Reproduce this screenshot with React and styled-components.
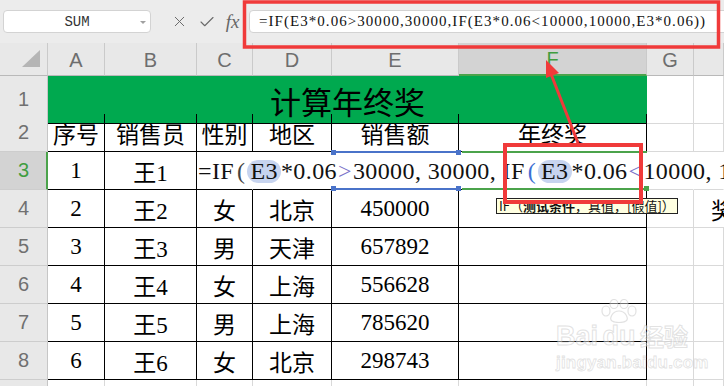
import React from 'react';
import styled, {createGlobalStyle} from 'styled-components';
import {X, Check} from 'lucide-react';

// sheet columns: row header, A..H
const COLS = '48px 57px 92px 56px 79px 127px 188px 47px 1fr';
const SERIF = '"Liberation Serif", "Noto Sans CJK SC", serif';

const GlobalStyle = createGlobalStyle`
  html, body {
    margin: 0;
    padding: 0;
    background: #fff;
    overflow: hidden;
  }
`;

const Page = styled.div`
  position: relative;
  width: 724px;
  height: 386px;
  overflow: hidden;
  background: #fff;
  font-family: "Liberation Sans", "Noto Sans CJK SC", sans-serif;
`;

const Toolbar = styled.div`
  display: flex;
  align-items: center;
  height: 43px;
  background: #ececec;
`;

const NameBox = styled.div`
  position: relative;
  box-sizing: border-box;
  width: 148px;
  height: 23px;
  margin-left: 3px;
  margin-right: 15px;
  background: #fff;
  border: 1px solid #d3d3d3;
  border-radius: 4px;
  display: flex;
  align-items: center;
  justify-content: center;
  font: 14px "Liberation Mono", monospace;
  color: #333;
`;

const Caret = styled.span`
  position: absolute;
  right: 4px;
  top: 10px;
  border-left: 3px solid transparent;
  border-right: 3px solid transparent;
  border-top: 3px solid #a0a0a0;
`;

const IconSlot = styled.div`
  width: ${(p) => p.$w || 27}px;
  display: flex;
  justify-content: center;
  align-items: center;
  color: #6a6a6a;
`;

const Fx = styled.span`
  font: italic 19px "Liberation Serif", serif;
  color: #666;
`;

const FormulaBox = styled.div`
  box-sizing: border-box;
  flex: 1;
  height: 23px;
  margin-left: 4px;
  margin-right: -12px;
  padding-left: 9px;
  background: #fff;
  border: 1px solid #d3d3d3;
  border-radius: 4px;
  display: flex;
  align-items: center;
  font: 15px ${SERIF};
  letter-spacing: 1.05px;
  color: #111;
  white-space: nowrap;
  overflow: hidden;
`;

const Row = styled.div`
  display: grid;
  grid-template-columns: ${COLS};
  height: ${(p) => p.$h || 38}px;
`;

const Corner = styled.div`
  box-sizing: border-box;
  grid-row: 1;
  background: #e8e8e8;
  border-right: 1px solid #cacaca;
  border-bottom: 1px solid #b9b9b9;
  display: flex;
  align-items: flex-end;
  justify-content: flex-end;
  padding: 0 7px 8px 0;
`;

const CornerTri = styled.span`
  width: 0;
  height: 0;
  border-left: 18px solid transparent;
  border-bottom: 17px solid #b5b5b5;
`;

const ColHead = styled.div`
  box-sizing: border-box;
  grid-row: 1;
  display: flex;
  align-items: center;
  justify-content: center;
  background: ${(p) => (p.$active ? '#d3d3d3' : '#e8e8e8')};
  border-right: 1px solid #cacaca;
  border-bottom: ${(p) => (p.$active ? '2px solid #4ba34b' : '1px solid #b9b9b9')};
  color: ${(p) => (p.$active ? '#3f9d3f' : '#6e6e6e')};
  font: 20px "Liberation Sans", sans-serif;
  padding-top: 2px;
`;

const RowHead = styled.div`
  box-sizing: border-box;
  grid-row: 1;
  grid-column: 1;
  display: flex;
  align-items: center;
  justify-content: center;
  background: ${(p) => (p.$active ? '#d3d3d3' : '#e8e8e8')};
  border-right: ${(p) => (p.$active ? '2px solid #4ba34b' : '1px solid #c6c6c6')};
  border-bottom: 1px solid #cdcdcd;
  color: ${(p) => (p.$active ? '#3f9d3f' : '#707070')};
  font: 20px "Liberation Sans", sans-serif;
  padding-left: ${(p) => (p.$active ? 1 : 0)}px;
`;

const Cell = styled.div`
  box-sizing: border-box;
  grid-row: 1;
  grid-column: ${(p) => p.$col || 'auto'};
  display: flex;
  align-items: center;
  justify-content: ${(p) => (p.$left ? 'flex-start' : 'center')};
  padding-left: ${(p) => (p.$left ? 17 : 0)}px;
  border-right: 1px solid
    ${(p) => (p.$noRight ? 'transparent' : p.$grid ? '#d9d9d9' : '#000')};
  border-bottom: 1px solid ${(p) => (p.$grid ? '#d9d9d9' : '#000')};
  font: 23px ${SERIF};
  color: #000;
  white-space: nowrap;
  padding-top: 1px;
`;

const TitleCell = styled.div`
  box-sizing: border-box;
  grid-row: 1;
  grid-column: 2 / 8;
  display: flex;
  align-items: center;
  justify-content: center;
  background: #00a94f;
  border-bottom: 1px solid #000;
  font: 31px ${SERIF};
  color: #000;
  padding-top: 2px;
`;

const EditLine = styled.div`
  grid-row: 1;
  grid-column: 4 / -1;
  z-index: 1;
  display: flex;
  align-items: center;
  padding-left: 1px;
  overflow: hidden;
  white-space: nowrap;
  font: 24px ${SERIF};
  letter-spacing: 0.4px;
  color: #111;
`;

const Paren = styled.span`
  margin: 0 2px 0 3px;
  color: ${(p) => (p.$blue ? '#3c6fd3' : '#444')};
`;

const Op = styled.span`
  color: #7b72c9;
  margin: 0 1px;
`;

const RefPill = styled.span`
  display: inline-block;
  line-height: 23px;
  padding: 0 3px;
  border-radius: 12px;
  background: #c7d4ef;
`;

const RefBox = styled.div`
  position: relative;
  grid-row: 1;
  grid-column: 6;
  z-index: 2;
  margin-top: -1px;
  border-top: 2px solid #4a73c9;
  border-bottom: 2px solid #4a73c9;
`;

const Handle = styled.span`
  position: absolute;
  width: 5px;
  height: 5px;
  background: ${(p) => p.$color || '#4a73c9'};
  ${(p) => (p.$bottom ? 'bottom: -3px;' : 'top: -3px;')}
  ${(p) => (p.$right ? 'right: -2px;' : 'left: -1px;')}
`;

const ActiveBox = styled.div`
  position: relative;
  grid-row: 1;
  grid-column: 7;
  z-index: 2;
  margin: -1px 0 0 3px;
  border-top: 2px solid #4ba34b;
  border-bottom: 2px solid #4ba34b;
`;

const Tooltip = styled.div`
  position: absolute;
  top: calc(100% + 10px);
  left: 34px;
  z-index: 3;
  padding: 0 2px;
  background: #ffffe1;
  border: 1px solid #222;
  font: 13px "Noto Sans CJK SC", sans-serif;
  line-height: 14px;
  color: #111;
  white-space: nowrap;

  b {
    font-weight: 700;
  }
`;

const Watermark = styled.div`
  position: absolute;
  left: 556px;
  top: 304px;
  z-index: 5;
  display: flex;
  flex-direction: column;
  pointer-events: none;
  opacity: 0.75;
`;

const MarkTop = styled.div`
  display: flex;
  align-items: flex-end;
  height: 46px;
`;

const MarkWord = styled.span`
  font: 700 ${(p) => p.$size || 27}px "Liberation Sans", "Noto Sans CJK SC", sans-serif;
  color: rgba(255, 255, 255, 0.6);
  -webkit-text-stroke: 1px rgba(200, 200, 200, 0.7);
  line-height: 1;
`;

const DuBlock = styled.div`
  display: flex;
  flex-direction: column;
  align-items: center;
`;

const MarkUrl = styled.span`
  margin-top: 3px;
  font: 700 17px "Liberation Sans", sans-serif;
  color: rgba(255, 255, 255, 0.6);
  -webkit-text-stroke: 0.8px rgba(200, 200, 200, 0.7);
  letter-spacing: 0.2px;
`;

const Annotations = styled.svg`
  position: absolute;
  left: 0;
  top: 0;
  z-index: 10;
  pointer-events: none;
`;

const letters = ['A', 'B', 'C', 'D', 'E', 'F', 'G', ''];
const heads = ['序号', '销售员', '性别', '地区', '销售额', '年终奖'];
const data = [
  ['4', '2', '王2', '女', '北京', '450000'],
  ['5', '3', '王3', '男', '天津', '657892'],
  ['6', '4', '王4', '女', '上海', '556628'],
  ['7', '5', '王5', '男', '上海', '785620'],
  ['8', '6', '王6', '女', '北京', '298743'],
];

const Paw = () => (
  <svg width="42" height="24" viewBox="0 0 42 24">
    <g fill="rgba(255,255,255,0.6)" stroke="rgba(200,200,200,0.7)" strokeWidth="1.2">
      <ellipse cx="8" cy="12" rx="4" ry="5" />
      <ellipse cx="16" cy="5" rx="4" ry="4.5" />
      <ellipse cx="26" cy="5" rx="4" ry="4.5" />
      <ellipse cx="34" cy="12" rx="4" ry="5" />
      <path d="M21 12 C14 12 11 20 14 22 C17 24 25 24 28 22 C31 20 28 12 21 12 Z" />
    </g>
  </svg>
);

const App = () => (
  <Page>
    <GlobalStyle />
    <Toolbar>
      <NameBox>
        SUM
        <Caret />
      </NameBox>
      <IconSlot>
        <X size={17} strokeWidth={1.4} />
      </IconSlot>
      <IconSlot>
        <Check size={18} strokeWidth={1.5} />
      </IconSlot>
      <IconSlot $w={25}>
        <Fx>fx</Fx>
      </IconSlot>
      <FormulaBox>=IF(E3*0.06&gt;30000,30000,IF(E3*0.06&lt;10000,10000,E3*0.06))</FormulaBox>
    </Toolbar>

    <Row $h={33}>
      <Corner>
        <CornerTri />
      </Corner>
      {letters.map((l, i) => (
        <ColHead key={i} $active={l === 'F'}>
          {l}
        </ColHead>
      ))}
    </Row>

    <Row>
      <RowHead>1</RowHead>
      <TitleCell>计算年终奖</TitleCell>
      <Cell $grid />
      <Cell $grid />
    </Row>

    <Row>
      <RowHead>2</RowHead>
      {heads.map((h) => (
        <Cell key={h}>{h}</Cell>
      ))}
      <Cell $grid />
      <Cell $grid />
    </Row>

    <Row>
      <RowHead $active>3</RowHead>
      <Cell $col={2}>1</Cell>
      <Cell $col={3}>王1</Cell>
      <Cell $col={4} $noRight />
      <Cell $col={5} $noRight />
      <Cell $col={6} $noRight />
      <Cell $col={7} $noRight />
      <Cell $col={8} $grid $noRight />
      <Cell $col={9} $grid $noRight />
      <EditLine>
        =IF<Paren>(</Paren>
        <RefPill>E3</RefPill>*0.06<Op>&gt;</Op>30000, 30000, IF<Paren $blue>(</Paren>
        <RefPill>E3</RefPill>*0.06<Op>&lt;</Op>10000, 10000, E3*0.06))
      </EditLine>
      <RefBox>
        <Handle />
        <Handle $right />
        <Handle $bottom />
        <Handle $bottom $right />
      </RefBox>
      <ActiveBox>
        <Handle $bottom $right $color="#4ba34b" />
        <Tooltip>
          IF（<b>测试条件</b>，真值，[假值]）
        </Tooltip>
      </ActiveBox>
    </Row>

    {data.map(([n, ...cells]) => (
      <Row key={n}>
        <RowHead>{n}</RowHead>
        {cells.map((c, i) => (
          <Cell key={i}>{c}</Cell>
        ))}
        <Cell />
        <Cell $grid />
        <Cell $grid $left>
          {n === '4' ? '奖' : ''}
        </Cell>
      </Row>
    ))}

    <Row>
      <RowHead>9</RowHead>
      {letters.map((l, i) => (
        <Cell key={i} $grid />
      ))}
    </Row>

    <Watermark>
      <MarkTop>
        <MarkWord>Bai</MarkWord>
        <DuBlock>
          <Paw />
          <MarkWord>du</MarkWord>
        </DuBlock>
        <MarkWord $size={24}>经验</MarkWord>
      </MarkTop>
      <MarkUrl>jingyan.baidu.com</MarkUrl>
    </Watermark>

    <Annotations width="724" height="386" viewBox="0 0 724 386">
      <g fill="none" stroke="#f03a3a">
        <rect x="244.5" y="2" width="474" height="45" strokeWidth="3.5" />
        <rect x="505" y="145" width="136" height="57" strokeWidth="4" />
        <line x1="578" y1="143" x2="551" y2="74" strokeWidth="3" />
      </g>
      <polygon points="546,60 559,73 546,78" fill="#f03a3a" />
    </Annotations>
  </Page>
);

export default App;
